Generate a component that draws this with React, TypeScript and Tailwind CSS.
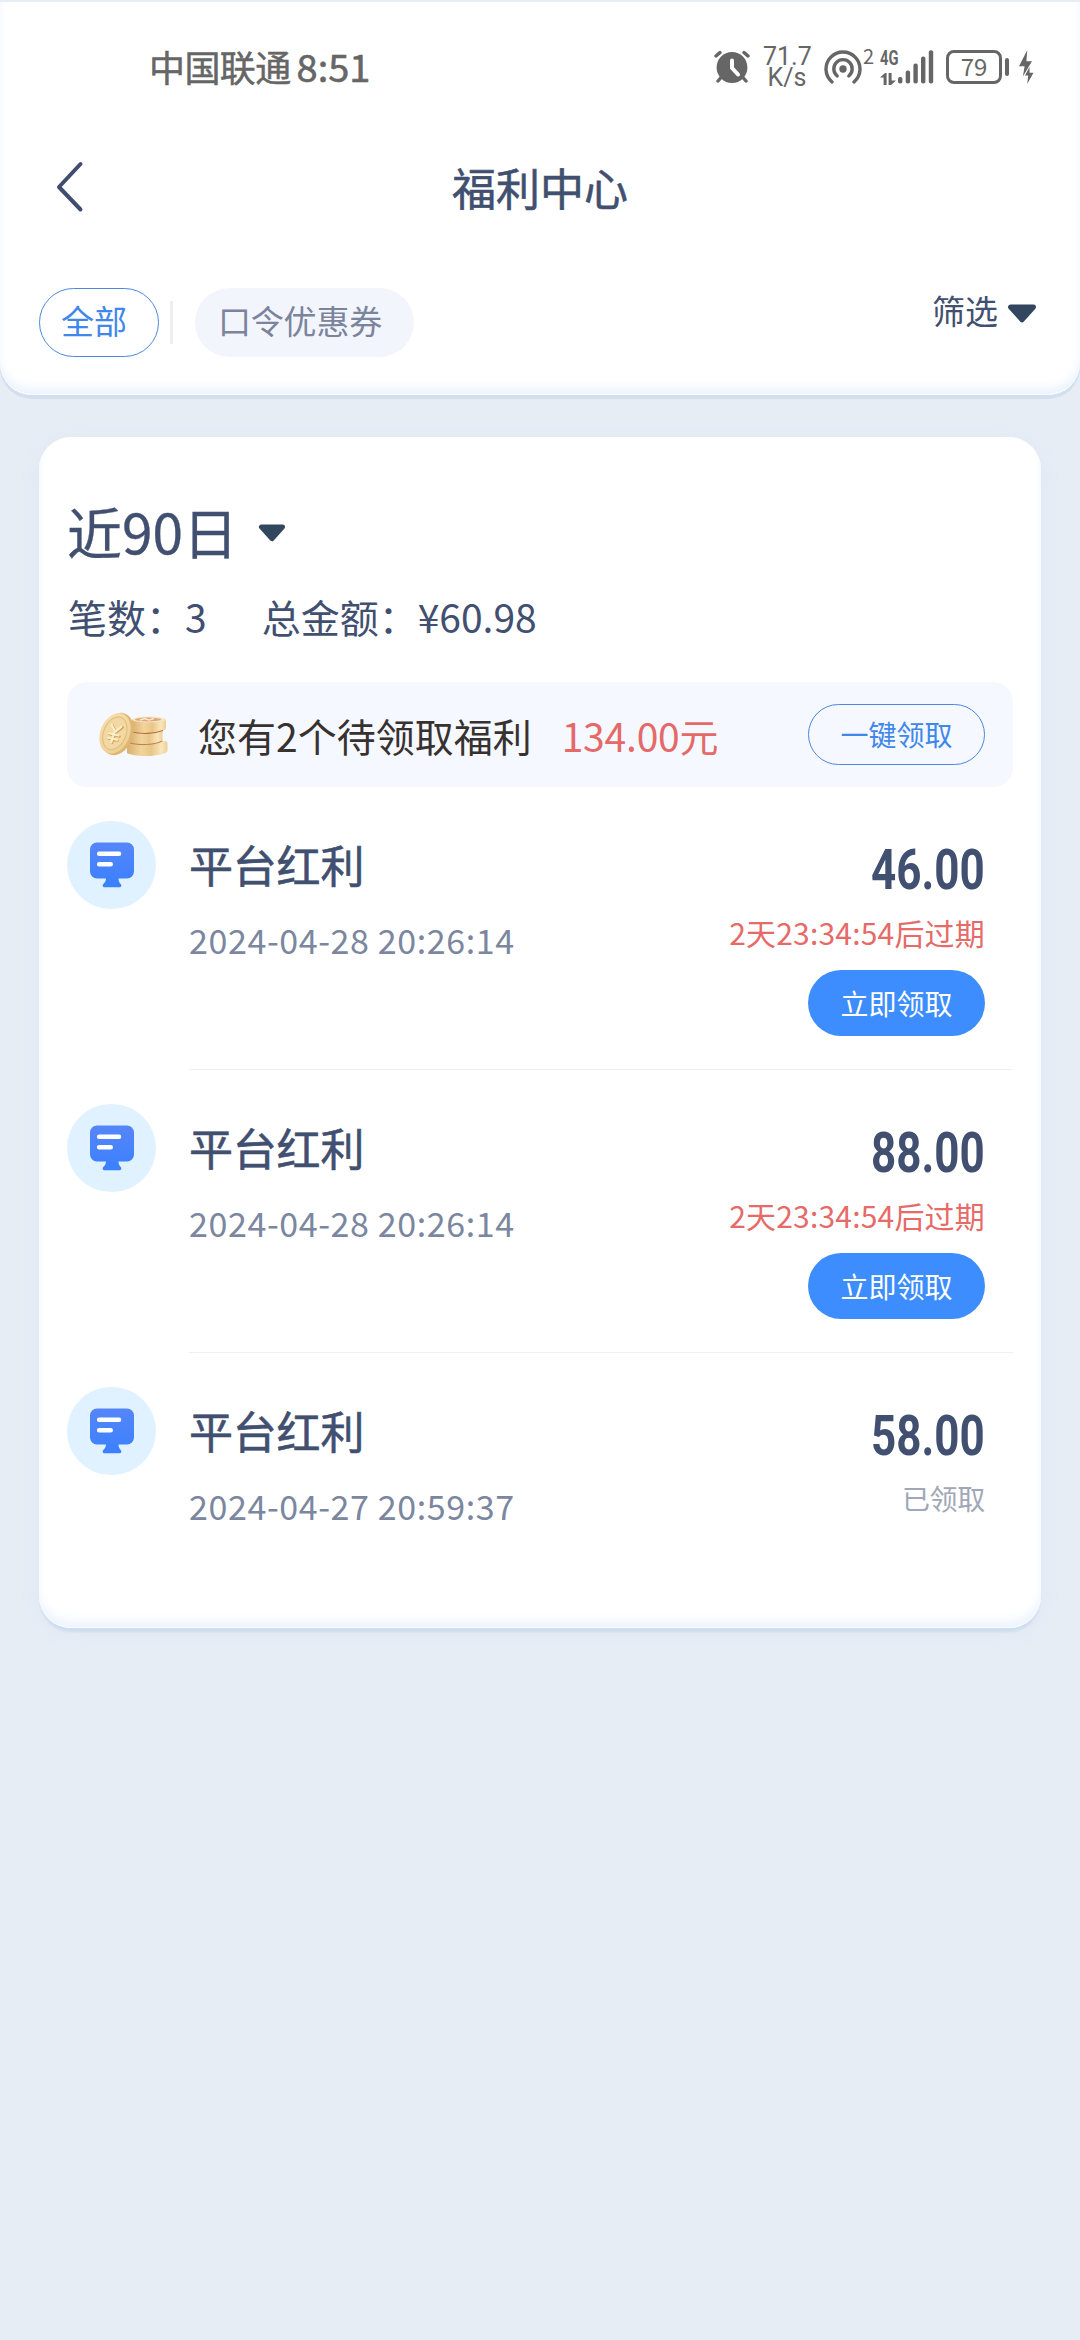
import React from 'react';

interface Welfare {
  id: number;
  title: string;
  time: string;
  amount: string;
  expire?: string;
}

const WELFARES: Welfare[] = [
  { id: 1, title: '平台红利', time: '2024-04-28 20:26:14', amount: '46.00', expire: '2天23:34:54后过期' },
  { id: 2, title: '平台红利', time: '2024-04-28 20:26:14', amount: '88.00', expire: '2天23:34:54后过期' },
  { id: 3, title: '平台红利', time: '2024-04-27 20:59:37', amount: '58.00' }
];

const AlarmIcon = () => (
  <svg width="36" height="34" viewBox="0 0 36 34" className="shrink-0">
    <g stroke="#666" strokeWidth="3.4" strokeLinecap="round">
      <path d="M2 6 6 2.500M34 6 30 2.500M7.500 27 4 31M28.500 27 32 31" />
    </g>
    <circle cx="18" cy="17.5" r="15.4" fill="#666" />
    <path d="M18 10.500v7.500l6 6.500" fill="none" stroke="#fff" strokeWidth="4" strokeLinecap="round" strokeLinejoin="round" />
  </svg>
);

const HotspotIcon = () => (
  <svg width="38" height="35" viewBox="0 0 38 35" className="shrink-0">
    <circle cx="19" cy="19" r="3.7" fill="#666" />
    <g fill="none" stroke="#666" strokeWidth="3.4" strokeLinecap="round">
      <path d="M13.2 26A9.2 9.2 0 1 1 24.8 26" />
      <path d="M8 32A17 17 0 1 1 30 32" />
    </g>
  </svg>
);

const DataArrows = () => (
  <svg width="16" height="12" viewBox="0 0 16 12">
    <path d="M3.6 12V4.6H0L5 0h1.6v12zM8.6 0h3v7.4H16L11 12H8.6z" fill="#666" />
  </svg>
);

const SignalBars = () => (
  <svg width="36" height="34" viewBox="0 0 36 34" fill="#666" className="shrink-0">
    <rect x="0" y="27" width="4.4" height="6.5" rx="2" />
    <rect x="7.7" y="20.5" width="4.4" height="13" rx="2" />
    <rect x="15.4" y="13.5" width="4.4" height="20" rx="2" />
    <rect x="23" y="6.5" width="4.4" height="27" rx="2" />
    <rect x="30.8" y="0.2" width="4.4" height="33.3" rx="2" />
  </svg>
);

const BoltIcon = () => (
  <svg width="15" height="35" viewBox="0 0 15 35" fill="#666" className="shrink-0">
    <path d="M8.3 0 0 16.2h5.6L3.9 26.5 13 11.3H7.4z" />
    <path d="M10.5 17 6 25.6h3.2L8.2 34 14.5 22.8h-3.9z" />
  </svg>
);

const Caret = ({ className }: { className: string }) => (
  <svg viewBox="0 0 30 19" className={className}>
    <path d="M3.500 3h23L15 15.800z" fill="#32475f" stroke="#32475f" strokeWidth="5" strokeLinejoin="round" />
  </svg>
);

const CoinsIcon = () => (
  <svg width="75" height="48" viewBox="0 0 75 48" className="shrink-0">
    <defs>
      <linearGradient id="coin-side" x1="0" x2="1" y1="0" y2="0">
        <stop offset="0" stopColor="#dcae70" />
        <stop offset="0.35" stopColor="#f1d49c" />
        <stop offset="0.6" stopColor="#e9c687" />
        <stop offset="0.85" stopColor="#f8e6bb" />
        <stop offset="1" stopColor="#edcf98" />
      </linearGradient>
      <linearGradient id="coin-face" x1="0" x2="1" y1="0" y2="1">
        <stop offset="0" stopColor="#f7dfae" />
        <stop offset="1" stopColor="#edcd90" />
      </linearGradient>
    </defs>
    {/* stack */}
    <path d="M31 30h38c1.500 0 2.500.8 2.500 2v7.500c0 3.200-9.500 5.500-21.500 5.500-9 0-15.500-1-19-3z" fill="url(#coin-side)" />
    <path d="M34 20h32.500v8.500c0 2.800-7 5-18 5-7 0-11-.8-14.500-2z" fill="url(#coin-side)" />
    <path d="M34 32c9 2.500 24 2.200 32.500-2" fill="none" stroke="#bd7f49" strokeWidth="1" />
    <path d="M36 8h34v9c0 2.800-7 5-18 5-7 0-12-.8-16-2z" fill="url(#coin-side)" />
    <path d="M36 21c9 2.200 22 2 31-1.500" fill="none" stroke="#b5723e" strokeWidth="1.100" />
    <ellipse cx="53" cy="8.500" rx="17" ry="3" fill="#f9e6c2" />
    <ellipse cx="52" cy="8.500" rx="13" ry="1.900" fill="#dfa680" />
    <path d="M44 9l5-1.500 4 1.600 5-1.600" stroke="#f9ebcd" strokeWidth="1.400" fill="none" />
    {/* leaning coin */}
    <ellipse cx="21.300" cy="23" rx="15.500" ry="21.800" transform="rotate(20 21.300 23)" fill="#e0b673" />
    <ellipse cx="19" cy="22.300" rx="14.600" ry="21" transform="rotate(22 19 22.300)" fill="url(#coin-face)" />
    <ellipse cx="18.800" cy="22.300" rx="11.200" ry="17" transform="rotate(22 18.800 22.300)" fill="#f2d8a2" stroke="#e0bb7c" strokeWidth="1" />
    <g stroke="#d6a25a" strokeWidth="2.600" strokeLinecap="round" fill="none">
      <path d="M16.500 14.500l3.500 7 6.500-5M19 22l-3 10M13.500 23l10 2.500M12.500 27.500l9 2" />
    </g>
    <g stroke="#fbeecb" strokeWidth="2.200" strokeLinecap="round" fill="none">
      <path d="M15.700 14l3.500 6.800 6-5M18.200 21.500l-3 10M13 22.300l9.500 2.200M12 26.800l9 2" />
    </g>
  </svg>
);

const PlatformIcon = () => (
  <svg width="46" height="46" viewBox="0 0 46 46">
    <defs>
      <linearGradient id="screen" x1="0" x2="0" y1="0" y2="1">
        <stop offset="0" stopColor="#5686f8" />
        <stop offset="1" stopColor="#3a80fe" />
      </linearGradient>
    </defs>
    <path
      d="M8 .5h30a7 7 0 0 1 7 7v22a7 7 0 0 1-7 7h-8.500c0 2.500 1 4.500 2.200 5.500 1 .8.800 3.200-.7 3.200H15c-1.500 0-1.700-2.400-.7-3.200 1.300-1 2.700-3 2.700-5.500H8a7 7 0 0 1-7-7v-22a7 7 0 0 1 7-7z"
      fill="url(#screen)"
    />
    <path d="M10.200 11.700h19.800M10.200 22.200h11.500" stroke="#fff" strokeWidth="4.600" strokeLinecap="round" />
  </svg>
);

const StatusBar = () => (
  <div className="flex h-[130px] items-center pl-[149px] text-[#666]">
    <span className="-mt-[2px] text-[36px] leading-[50px] tracking-[-0.6px] [-webkit-text-stroke:0.5px]">中国联通</span>
    <span className="-mt-[2px] ml-[6px] text-[38px] leading-[50px] [-webkit-text-stroke:0.6px]">8:51</span>

    <div className="ml-auto flex items-center pr-[46px]">
      <AlarmIcon />
      <div className="ml-[13px] w-[48px] text-center font-[Roboto] text-[25px] leading-[22px]">
        <div className="h-[21.5px]">71.7</div>
        <div className="h-[21.5px]">K/s</div>
      </div>
      <div className="ml-[13px]">
        <HotspotIcon />
      </div>
      <span className="-mt-[22px] ml-px w-[13px] text-[20px] leading-[20px]">2</span>
      <div className="ml-[4px] flex h-[35px] w-[18px] flex-col justify-between">
        <span className="w-[26px] origin-left scale-x-[0.7] font-[Roboto] text-[21px] leading-[16px] font-bold">4G</span>
        <DataArrows />
      </div>
      <SignalBars />
      <div className="ml-[12px] flex h-[34px] w-[56px] items-center justify-center rounded-[8px] border-[3px] border-[#666] pb-[2px] text-[24px] leading-[28px]">
        79
      </div>
      <div className="ml-[3px] h-[18px] w-[4px] rounded-full bg-[#666]" />
      <div className="ml-[10px]">
        <BoltIcon />
      </div>
    </div>
  </div>
);

const NavBar = () => (
  <div className="grid h-[109px] grid-cols-[200px_1fr_200px] items-center">
    <button className="pl-[55px]">
      <svg width="30" height="52" viewBox="0 0 30 52" fill="none">
        <path d="M25.500 3 4 26 25.500 48.500" stroke="#404d6e" strokeWidth="4" strokeLinecap="round" strokeLinejoin="round" />
      </svg>
    </button>
    <h1 className="text-center text-[44px] leading-[60px] [-webkit-text-stroke:0.6px]">福利中心</h1>
  </div>
);

const FilterBar = () => (
  <div className="flex items-start pt-[47px] pr-[43px] pl-[39px]">
    <button className="flex h-[69px] w-[120px] items-center rounded-full border border-[#4a88dc] pb-[4px] pl-[21px] text-[33px] text-[#3f87ea]">
      全部
    </button>
    <div className="mt-[13px] ml-[11px] h-[43px] w-[3px] bg-[#eeeeef]" />
    <button className="ml-[22px] flex h-[69px] w-[219px] items-center rounded-full bg-[#f2f5fb] pb-[4px] pl-[23px] text-[33px] tracking-[-0.2px] text-[#7b849c]">
      口令优惠券
    </button>
    <button className="mt-[2px] ml-auto flex h-[42px] items-center text-[33px]">
      筛选
      <Caret className="mt-[5px] ml-[9px] h-[19px] w-[30px]" />
    </button>
  </div>
);

const WelfareRow: React.FC<{ item: Welfare; last: boolean }> = ({ item, last }) => (
  <li className="flex">
    <div className="mt-[34px] flex h-[88px] w-[89px] shrink-0 items-center justify-center rounded-full bg-[#e0f2ff]">
      <PlatformIcon />
    </div>
    <div className={`ml-[33px] flex flex-1 justify-between pr-[28px] ${last ? 'h-[275px]' : 'h-[283px] border-b border-[#f0f0f3]'}`}>
      <div className="pt-[47px]">
        <div className="text-[44px] leading-[60px] tracking-[-0.2px] [-webkit-text-stroke:0.6px]">{item.title}</div>
        <div className="mt-[26px] text-[34px] leading-[40px] tracking-[0.6px] text-[#7b869f]">{item.time}</div>
      </div>
      <div className="flex flex-col items-end pt-[55px]">
        <div className="origin-right scale-x-[0.785] font-[Roboto] text-[56px] leading-[56px] font-bold">{item.amount}</div>
        {item.expire ? (
          <>
            <div className="mt-[14px] text-[30px] leading-[40px] tracking-[0.2px] text-[#e66a68]">{item.expire}</div>
            <button className="mt-[18px] h-[66px] w-[177px] rounded-full bg-[#3d8dff] text-[28px] leading-[62px] text-white">
              立即领取
            </button>
          </>
        ) : (
          <div className="mt-[14px] text-[28px] leading-[40px] tracking-[-0.3px] text-[#a1a7b6]">已领取</div>
        )}
      </div>
    </div>
  </li>
);

const App: React.FC = () => {
  return (
    <div className="flex h-[2340px] w-[1080px] flex-col bg-[#e6edf5] font-['Noto_Sans_CJK_SC',sans-serif] text-[#414f70]">
      <header className="mt-[2px] h-[393px] shrink-0 rounded-b-[32px] bg-white shadow-[0_4px_1px_#d3dfee,inset_0_-1px_0_#f8fcff,inset_0_-8px_12px_-2px_#eaf2fd]">
        <StatusBar />
        <NavBar />
        <FilterBar />
      </header>

      <main className="mx-[39px] mt-[42px] rounded-[32px] bg-white px-[28px] pt-[53px] shadow-[0_5px_2px_-1px_#cfdeef,0_4px_20px_#dfe7f3,inset_0_-1px_0_#f8fcff,inset_0_-8px_12px_-2px_#eaf2fd]">
        <button className="flex h-[80px] items-center text-[55px] leading-[80px] [-webkit-text-stroke:0.3px]">
          近90日
          <Caret className="mt-[5px] ml-[20px] h-[18px] w-[28px]" />
        </button>

        <div className="mt-[16px] flex pl-px text-[39px] leading-[60px]">
          <span>笔数：3</span>
          <span className="ml-[55px]">总金额：¥60.98</span>
        </div>

        {/* 待领取提示 */}
        <div className="mt-[36px] flex h-[105px] items-center rounded-[20px] bg-[#f5f8ff] pr-[28px] pl-[29px]">
          <CoinsIcon />
          <span className="ml-[27px] text-[39px] leading-[60px] text-[#37322f]">您有2个待领取福利</span>
          <span className="ml-[30px] text-[39px] leading-[60px] tracking-[-0.2px] text-[#e46a69]">134.00元</span>
          <button className="ml-auto h-[61px] w-[177px] rounded-full border border-[#4a88dc] text-[28px] leading-[57px] text-[#3f87ea]">
            一键领取
          </button>
        </div>

        <ul>
          {WELFARES.map((item, i) => (
            <WelfareRow key={item.id} item={item} last={i === WELFARES.length - 1} />
          ))}
        </ul>
      </main>
    </div>
  );
};

export default App;
